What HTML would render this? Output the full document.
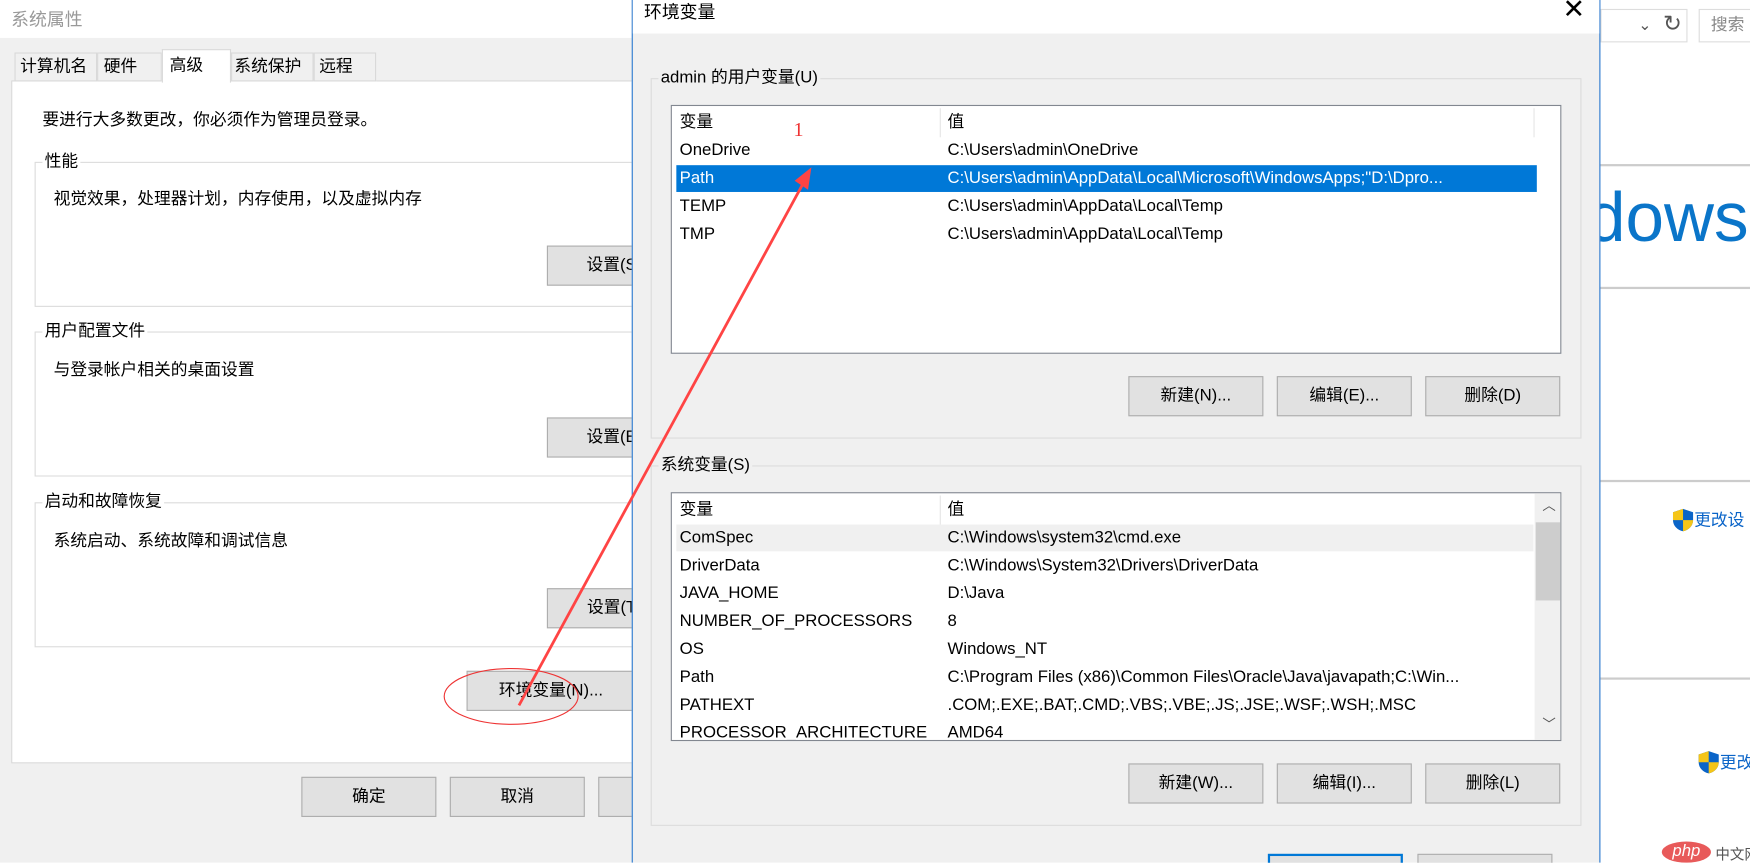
<!DOCTYPE html>
<html><head><meta charset="utf-8"><style>
html,body{margin:0;padding:0;width:1750px;height:863px;overflow:hidden;background:#fff}
#w{position:absolute;left:0;top:0;width:1568px;height:773px;overflow:hidden;transform:scale(1.11607);transform-origin:0 0;font-family:"Liberation Sans","Noto Sans CJK SC",sans-serif;font-size:15px;color:#000}
.a{position:absolute;white-space:nowrap}
.btn{position:absolute;background:#e1e1e1;border:1px solid #adadad;box-sizing:border-box;text-align:center;line-height:34px;height:36px;width:121px}
.grp{position:absolute;border:1px solid #dcdcdc;box-sizing:border-box}
.gl{position:absolute;top:-11px;left:6px;padding:0 2px;line-height:20px}
.lb{position:absolute;background:#fff;border:1px solid #828790;box-sizing:border-box;overflow:hidden}
.r{position:absolute;left:6px;height:24px;line-height:24px;width:768px}
.r span{position:absolute;left:240px}
</style></head><body><div id="w">
<div class="a" style="left:0;top:0;width:566px;height:34px;background:#fff"></div>
<div class="a" style="left:0;top:34px;width:566px;height:739px;background:#f0f0f0"></div>
<div class="a" style="left:10px;top:4px;color:#999;font-size:16px">系统属性</div>
<div class="a" style="left:10px;top:72px;width:560px;height:612px;background:#fff;border:1px solid #d9d9d9;box-sizing:border-box"></div>
<div class="a" style="left:13px;top:47px;width:74px;height:26px;background:#f0f0f0;border:1px solid #d9d9d9;box-sizing:border-box;line-height:24px;padding-left:4px">计算机名</div>
<div class="a" style="left:87px;top:47px;width:58px;height:26px;background:#f0f0f0;border:1px solid #d9d9d9;box-sizing:border-box;line-height:24px;padding-left:5px">硬件</div>
<div class="a" style="left:145px;top:44px;width:62px;height:30px;background:#fff;border:1px solid #d9d9d9;border-bottom:none;box-sizing:border-box;line-height:28px;padding-left:6px">高级</div>
<div class="a" style="left:207px;top:47px;width:74px;height:26px;background:#f0f0f0;border:1px solid #d9d9d9;box-sizing:border-box;line-height:24px;padding-left:2px">系统保护</div>
<div class="a" style="left:281px;top:47px;width:56px;height:26px;background:#f0f0f0;border:1px solid #d9d9d9;box-sizing:border-box;line-height:24px;padding-left:4px">远程</div>
<div class="a" style="left:38px;top:96px">要进行大多数更改，你必须作为管理员登录。</div>
<div class="grp" style="left:31px;top:145px;width:560px;height:130px"><div class="gl" style="background:#fff">性能</div></div>
<div class="a" style="left:48px;top:167px">视觉效果，处理器计划，内存使用，以及虚拟内存</div>
<div class="btn" style="left:490px;top:220px">设置(S)</div>
<div class="grp" style="left:31px;top:297px;width:560px;height:130px"><div class="gl" style="background:#fff">用户配置文件</div></div>
<div class="a" style="left:48px;top:320px">与登录帐户相关的桌面设置</div>
<div class="btn" style="left:490px;top:374px">设置(E)</div>
<div class="grp" style="left:31px;top:450px;width:560px;height:130px"><div class="gl" style="background:#fff">启动和故障恢复</div></div>
<div class="a" style="left:48px;top:473px">系统启动、系统故障和调试信息</div>
<div class="btn" style="left:490px;top:527px">设置(T)</div>
<div class="btn" style="left:418px;top:601px;width:150px;text-align:left;padding-left:28px">环境变量(N)...</div>
<div class="btn" style="left:270px;top:696px">确定</div>
<div class="btn" style="left:403px;top:696px">取消</div>
<div class="btn" style="left:536px;top:696px">应用</div>
<div class="a" style="left:1434px;top:0;width:134px;height:773px;background:#fff"></div>
<div class="a" style="left:1434px;top:8px;width:78px;height:30px;border:1px solid #ddd;box-sizing:border-box"></div>
<div class="a" style="left:1468px;top:8px;color:#555;font-size:14px;line-height:28px">⌄</div>
<div class="a" style="left:1490px;top:8px;color:#555;font-size:20px;line-height:28px">↻</div>
<div class="a" style="left:1522px;top:8px;width:60px;height:30px;border:1px solid #ddd;box-sizing:border-box;color:#888;line-height:28px;padding-left:10px">搜索</div>
<div class="a" style="left:1434px;top:147px;width:134px;height:2px;background:#ccc"></div>
<div class="a" style="left:1422px;top:160px;color:#0a75c9;font-size:62px;font-family:'Liberation Sans',sans-serif">dows</div>
<div class="a" style="left:1434px;top:257px;width:134px;height:2px;background:#ccc"></div>
<div class="a" style="left:1434px;top:430px;width:134px;height:2px;background:#ccc"></div>
<div class="a" style="left:1434px;top:607px;width:134px;height:2px;background:#ccc"></div>
<svg class="a" style="left:1497px;top:455px" width="22" height="22" viewBox="0 0 22 22"><path d="M11 1L2 4v7c0 5 4 9 9 10 5-1 9-5 9-10V4z" fill="#0a64c8"/><path d="M11 1v10H2V4zM11 11h9c0 5-4 9-9 10z" fill="#f5c518"/></svg>
<div class="a" style="left:1518px;top:455px;color:#0a64c8">更改设</div>
<svg class="a" style="left:1520px;top:672px" width="22" height="22" viewBox="0 0 22 22"><path d="M11 1L2 4v7c0 5 4 9 9 10 5-1 9-5 9-10V4z" fill="#0a64c8"/><path d="M11 1v10H2V4zM11 11h9c0 5-4 9-9 10z" fill="#f5c518"/></svg>
<div class="a" style="left:1541px;top:672px;color:#0a64c8">更改</div>
<div class="a" style="left:1489px;top:754px;width:44px;height:19px;border-radius:50%;background:#e85a5a;color:#fff;font-style:italic;font-size:15px;line-height:18px;text-align:center">php</div>
<div class="a" style="left:1537px;top:755px;color:#555;font-size:13px">中文网</div>
<div class="a" style="left:566px;top:0;width:868px;height:773px;background:#f0f0f0;border-left:1px solid #2b79d0;border-right:1px solid #2b79d0;box-sizing:border-box"></div>
<div class="a" style="left:567px;top:0;width:866px;height:30px;background:#fff"></div>
<div class="a" style="left:577px;top:-3px;font-size:16px">环境变量</div>
<div class="a" style="left:1400px;top:-6px;font-size:24px;font-weight:300">✕</div>
<div class="grp" style="left:583px;top:70px;width:834px;height:323px"><div class="gl" style="background:#f0f0f0">admin 的用户变量(U)</div></div>
<div class="lb" style="left:601px;top:94px;width:798px;height:223px">
<div class="a" style="left:240px;top:2px;width:1px;height:26px;background:#e5e5e5"></div>
<div class="a" style="left:772px;top:2px;width:1px;height:26px;background:#e5e5e5"></div>
<div class="r" style="top:3px;left:7px">变量<span>值</span></div>
<div class="r" style="top:28px;left:7px">OneDrive<span>C:\Users\admin\OneDrive</span></div>
<div class="r" style="top:53px;left:4px;background:#0078d7;color:#fff;padding-left:3px">Path<span style="left:243px">C:\Users\admin\AppData\Local\Microsoft\WindowsApps;"D:\Dpro...</span></div>
<div class="r" style="top:78px;left:7px">TEMP<span>C:\Users\admin\AppData\Local\Temp</span></div>
<div class="r" style="top:103px;left:7px">TMP<span>C:\Users\admin\AppData\Local\Temp</span></div>
</div>
<div class="btn" style="left:1011px;top:337px">新建(N)...</div>
<div class="btn" style="left:1144px;top:337px">编辑(E)...</div>
<div class="btn" style="left:1277px;top:337px">删除(D)</div>
<div class="grp" style="left:583px;top:417px;width:834px;height:323px"><div class="gl" style="background:#f0f0f0">系统变量(S)</div></div>
<div class="lb" style="left:601px;top:441px;width:798px;height:223px">
<div class="a" style="left:240px;top:2px;width:1px;height:26px;background:#e5e5e5"></div>
<div class="a" style="left:773px;top:0;width:24px;height:221px;background:#f0f0f0"></div>
<div class="a" style="left:774px;top:26px;width:22px;height:70px;background:#cdcdcd"></div>
<div class="a" style="left:780px;top:2px;font-size:12px;color:#555">︿</div>
<div class="a" style="left:780px;top:198px;font-size:12px;color:#555">﹀</div>
<div class="r" style="top:3px;left:7px">变量<span>值</span></div>
<div class="r" style="top:28px;left:4px;width:768px;background:#f0f0f0;padding-left:3px;box-sizing:border-box">ComSpec<span style="left:243px">C:\Windows\system32\cmd.exe</span></div>
<div class="r" style="top:53px;left:7px">DriverData<span>C:\Windows\System32\Drivers\DriverData</span></div>
<div class="r" style="top:78px;left:7px">JAVA_HOME<span>D:\Java</span></div>
<div class="r" style="top:103px;left:7px">NUMBER_OF_PROCESSORS<span>8</span></div>
<div class="r" style="top:128px;left:7px">OS<span>Windows_NT</span></div>
<div class="r" style="top:153px;left:7px">Path<span>C:\Program Files (x86)\Common Files\Oracle\Java\javapath;C:\Win...</span></div>
<div class="r" style="top:178px;left:7px">PATHEXT<span>.COM;.EXE;.BAT;.CMD;.VBS;.VBE;.JS;.JSE;.WSF;.WSH;.MSC</span></div>
<div class="r" style="top:203px;left:7px">PROCESSOR_ARCHITECTURE<span>AMD64</span></div>
</div>
<div class="btn" style="left:1011px;top:684px">新建(W)...</div>
<div class="btn" style="left:1144px;top:684px">编辑(I)...</div>
<div class="btn" style="left:1277px;top:684px">删除(L)</div>
<div class="btn" style="left:1136px;top:765px;border:2px solid #0078d7"></div>
<div class="btn" style="left:1270px;top:765px"></div>
<div class="a" style="left:711px;top:106px;color:#e33;font-family:'Liberation Serif',serif;font-size:18px">1</div>
<svg class="a" style="left:0;top:0" width="1568" height="773"><ellipse cx="458" cy="624" rx="60" ry="25" fill="none" stroke="#e33" stroke-width="1"/><line x1="465" y1="632" x2="722" y2="160" stroke="#f44" stroke-width="2.5"/><path d="M727 150L712 162L724 170Z" fill="#f44"/></svg>
</div></body></html>
